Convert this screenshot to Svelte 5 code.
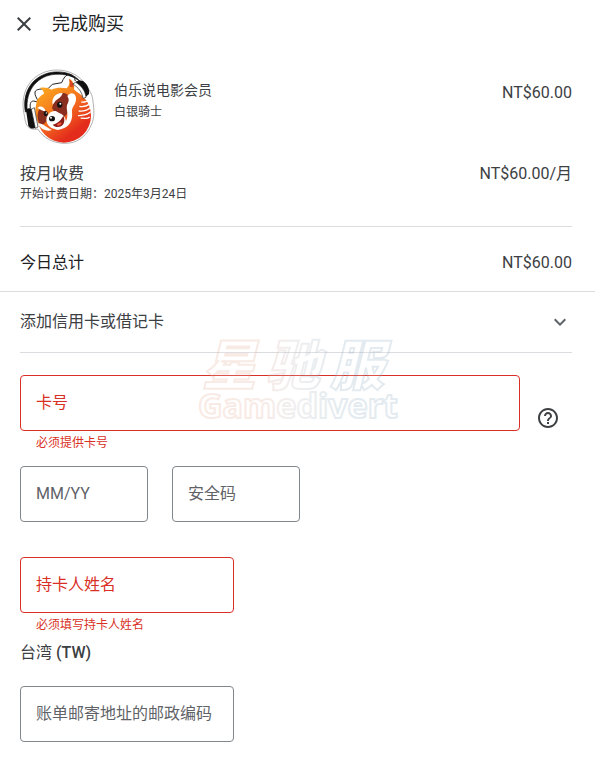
<script lang="ts">
	let cardNumber = $state('');
	let expiry = $state('');
	let cvc = $state('');
	let holder = $state('');
	let postcode = $state('');
	let cardOpen = $state(true);
</script>

<main class="checkout">
	<header>
		<button type="button" class="icon-button" aria-label="关闭">
			<svg width="24" height="24" viewBox="0 0 24 24" aria-hidden="true">
				<path d="M19 6.41 17.59 5 12 10.59 6.41 5 5 6.41 10.59 12 5 17.59 6.41 19 12 13.41 17.59 19 19 17.59 13.41 12z" />
			</svg>
		</button>
		<h1>完成购买</h1>
	</header>

	<section class="summary">
		<div class="product">
			<svg class="avatar" viewBox="0 9 228 228" aria-hidden="true">
				<defs>
					<linearGradient id="fur" gradientUnits="userSpaceOnUse" x1="60" y1="70" x2="160" y2="200">
						<stop offset="0" stop-color="#fba61d" />
						<stop offset="0.55" stop-color="#f4701f" />
						<stop offset="1" stop-color="#e42c1c" />
					</linearGradient>
				</defs>
				<path d="M10 132C2 60 48 14 108 12c42-1 78 20 97 56 6 10 13 20 14 40 4 24 4 48-4 66-16 40-46 59-82 58-36-1-62-16-80-43-22 4-33-6-37-24z" fill="#fff" stroke="#8b8b8b" stroke-width="2" />
				<path d="M16 138C4 66 50 22 104 18c32-2 58 6 78 30 -22-18-46-25-77-23C58 28 14 68 22 136z" fill="#111" stroke="#111" stroke-width="2" />
				<path d="M31 126c-2-14 2-24 14-20l10 2c-4-12-12-20-10-30 2-9 18-9 40-11l12-12 28-5c6-14 12-24 24-25 9 1 15 9 17 20" fill="none" stroke="#222" stroke-width="3" stroke-linejoin="round" />
				<circle cx="132" cy="149" r="81" fill="url(#fur)" />
				<path d="M50 104c6-10 13-16 22-21-1-8-6-13-12-17 12-3 25 0 34 5 15-7 32-7 46-4 8-8 10-18 7-29 12 6 18 18 15 32 26 22 36 54 22 82-16 34-60 49-100 40-20-4-38-30-38-58 0-12 4-20 4-30z" fill="url(#fur)" />
				<path d="M147 39c9 5 14 14 14 25l-12-2c2-8 1-15-2-23z" fill="#d9481e" />
				<path d="M58 130c10-6 24 4 28 18l2 8-14 16-12 8c-10-14-12-38-4-50z" fill="#8a2f20" />
				<path d="M104 100c10-26 42-25 48 2 3 22-8 44-24 54l-22-14-10-16z" fill="#8a2f20" />
				<path d="M98 116c-4-20 8-36 30-35-4 14-16 18-22 24-3 4-5 8-8 11z" fill="#fff" />
				<path d="M52 126c8-10 22-3 25 9-8 2-16-4-25-9z" fill="#fff" />
				<path d="M80 154c8-18 24-24 36-14 12 4 20 12 22 24-3 18-14 28-30 26-20-2-32-18-28-36z" fill="#fff" />
				<path d="M54 172c16 1 24 12 42 20-16 6-36-2-42-20z" fill="#fff" />
				<path d="M142 90c12-16 28-6 26 12-2 16-14 22-12 36 3 26-8 46-34 52-6 2-14 1-18-1 24-4 36-18 38-38 2-16-6-28 2-40 4-8 2-14-2-21z" fill="#fff" />
				<path d="M98 176c14-4 26-14 32-27 8 16 0 34-16 34-7 0-12-3-16-7z" fill="#8b1d17" />
				<path d="M110 178c3-8 10-10 15-8-1 7-8 11-15 8z" fill="#ef5340" />
				<ellipse cx="96" cy="158" rx="9" ry="8" fill="#111" />
				<circle cx="93" cy="155" r="3" fill="#fff" />
				<ellipse cx="77" cy="143" rx="6" ry="7" fill="#111" />
				<circle cx="79" cy="141" r="2" fill="#fff" />
				<ellipse cx="119" cy="116" rx="8" ry="9" fill="#111" />
				<circle cx="121" cy="113" r="3" fill="#fff" />
				<path d="M184 108c12 2 20-4 26-10M178 121c16 4 26-3 34-10M176 135c16 2 28-3 37-11M174 149c15-2 28 0 38-12M182 157c12-2 18 4 27-4" fill="none" stroke="#fff" stroke-width="4" />
				<path d="M18 132c4-6 14-7 18-3l12 54c-8 8-19 5-23-4z" fill="#111" />
				<path d="M34 130l9-5 11 58-8 4z" fill="#fff" stroke="#222" stroke-width="2" />
				<path d="M166 48c8-5 18-6 24-2 12 9 20 24 17 38l-10 9c-4-20-14-34-31-45z" fill="#111" />
				<path d="M158 54l9-5c18 11 29 26 31 45l-9 3c-3-19-14-33-31-43z" fill="#fff" stroke="#222" stroke-width="2" />
			</svg>
			<div class="product-name">
				<h2>伯乐说电影会员</h2>
				<p>白银骑士</p>
			</div>
			<span class="price">NT$60.00</span>
		</div>

		<div class="row billing">
			<div>
				<p>按月收费</p>
				<small>开始计费日期：2025年3月24日</small>
			</div>
			<span class="price">NT$60.00/月</span>
		</div>

		<div class="row total">
			<strong>今日总计</strong>
			<span class="price">NT$60.00</span>
		</div>
	</section>

	<section class="payment">
		<button type="button" class="method" aria-expanded={cardOpen} onclick={() => (cardOpen = !cardOpen)}>
			<span>添加信用卡或借记卡</span>
			<svg width="24" height="24" viewBox="0 0 24 24" aria-hidden="true">
				<path d="M7.41 8.59 12 13.17l4.59-4.58L18 10l-6 6-6-6z" />
			</svg>
		</button>

		{#if cardOpen}
			<form>
				<div class="card-row">
					<div class="field-group">
						<label class="field error">
							<span class:filled={cardNumber}>卡号</span>
							<input type="text" inputmode="numeric" autocomplete="cc-number" aria-describedby="number-error" bind:value={cardNumber} />
						</label>
						<p class="message" id="number-error">必须提供卡号</p>
					</div>
					<button type="button" class="icon-button help" aria-label="帮助">
						<svg width="24" height="24" viewBox="0 0 24 24" aria-hidden="true">
							<path d="M11 18h2v-2h-2v2zm1-16C6.48 2 2 6.48 2 12s4.48 10 10 10 10-4.48 10-10S17.52 2 12 2zm0 18c-4.41 0-8-3.59-8-8s3.59-8 8-8 8 3.59 8 8-3.59 8-8 8zm0-14c-2.21 0-4 1.79-4 4h2c0-1.1.9-2 2-2s2 .9 2 2c0 2-3 1.75-3 5h2c0-2.25 3-2.5 3-5 0-2.21-1.79-4-4-4z" />
						</svg>
					</button>
				</div>

				<div class="short-fields">
					<label class="field">
						<span class:filled={expiry}>MM/YY</span>
						<input type="text" autocomplete="cc-exp" bind:value={expiry} />
					</label>
					<label class="field">
						<span class:filled={cvc}>安全码</span>
						<input type="text" autocomplete="cc-csc" bind:value={cvc} />
					</label>
				</div>

				<div class="address">
					<label class="field error">
						<span class:filled={holder}>持卡人姓名</span>
						<input type="text" autocomplete="cc-name" aria-describedby="holder-error" bind:value={holder} />
					</label>
					<p class="message" id="holder-error">必须填写持卡人姓名</p>
					<p class="country">台湾 <b>(TW)</b></p>
					<label class="field">
						<span class:filled={postcode}>账单邮寄地址的邮政编码</span>
						<input type="text" autocomplete="postal-code" bind:value={postcode} />
					</label>
				</div>
			</form>
		{/if}
	</section>

	<svg class="watermark" width="208" height="84" viewBox="0 0 208 84" aria-hidden="true">
		<defs>
			<linearGradient id="mark" gradientUnits="userSpaceOnUse" x1="0" y1="0" x2="208" y2="0">
				<stop offset="0.3" stop-color="#e8b5a2" />
				<stop offset="0.5" stop-color="#c8c8cc" />
				<stop offset="0.7" stop-color="#9fbacb" />
			</linearGradient>
		</defs>
		<g fill="#fff" fill-opacity="0.6" stroke="url(#mark)" stroke-width="2">
			<text class="mark-title" x="8 72 136" y="47">星驰服</text>
			<text class="mark-name" x="4" y="80">Gamedivert</text>
		</g>
	</svg>
</main>

<style>
	:global(body) {
		margin: 0;
		background: #fff;
	}

	.checkout {
		position: relative;
		font-family: Roboto, 'Noto Sans CJK SC', sans-serif;
		font-size: 16px;
		line-height: 24px;
		color: #3c4043;
		padding-bottom: 16px;
	}

	h1, h2, p {
		margin: 0;
		font-weight: 400;
	}

	button {
		font: inherit;
		color: inherit;
		background: none;
		border: 0;
		padding: 0;
		cursor: pointer;
	}

	button svg {
		display: block;
		fill: currentColor;
	}

	header {
		display: flex;
		align-items: center;
		gap: 16px;
		height: 48px;
		padding: 0 12px;
		color: #202124;
	}

	header .icon-button {
		color: #3c4043;
	}

	h1 {
		font-size: 18px;
	}

	.summary {
		padding: 21px 23px 16px 20px;
		border-bottom: 1px solid #dadce0;
	}

	.product {
		display: flex;
		align-items: flex-start;
	}

	.avatar {
		width: 76px;
		height: 76px;
		flex-shrink: 0;
	}

	.product-name {
		flex: 1;
		padding: 9px 0 0 18px;
	}

	.product-name h2 {
		font-size: 14px;
	}

	.product-name p {
		font-size: 12px;
		line-height: 20px;
	}

	.product .price {
		padding-top: 12px;
	}

	.row {
		display: flex;
		justify-content: space-between;
	}

	.billing {
		padding: 17px 0 24px;
		border-bottom: 1px solid #dadce0;
	}

	.billing small {
		display: block;
		font-size: 12px;
		line-height: 16px;
	}

	.total {
		padding-top: 24px;
	}

	.total strong {
		font-weight: 400;
		color: #202124;
	}

	.payment {
		padding: 0 23px 0 20px;
	}

	.method {
		display: flex;
		align-items: center;
		justify-content: space-between;
		width: 100%;
		height: 61px;
		border-bottom: 1px solid #dadce0;
	}

	.method svg {
		color: #5f6368;
	}

	form {
		padding-top: 22px;
	}

	.card-row {
		display: flex;
		gap: 16px;
	}

	.field-group {
		flex: 1;
	}

	.help {
		align-self: flex-start;
		padding: 31px 12px 0 0;
	}

	.field {
		display: grid;
		align-items: center;
		color: #5f6368;
	}

	.field span,
	.field input {
		grid-area: 1 / 1;
	}

	.field span {
		padding-left: 16px;
		pointer-events: none;
	}

	.field span.filled {
		align-self: start;
		font-size: 12px;
		line-height: 16px;
	}

	.field input {
		box-sizing: border-box;
		width: 100%;
		height: 56px;
		padding: 8px 15px 0;
		font: inherit;
		color: #202124;
		background: transparent;
		border: 1px solid #80868b;
		border-radius: 4px;
	}

	.error {
		color: #d93025;
	}

	.field.error input {
		border-color: #d93025;
	}

	.message {
		padding-left: 16px;
		font-size: 12px;
		color: #d93025;
	}

	.short-fields {
		display: grid;
		grid-template-columns: repeat(2, 128px);
		gap: 24px;
		padding: 11px 0 35px;
	}

	.address {
		max-width: 214px;
	}

	.country {
		padding: 4px 0 21px;
	}

	.country b {
		font-weight: 500;
	}

	/* lies over the card fields */
	.watermark {
		position: absolute;
		top: 338px;
		left: 50%;
		margin-left: -104px;
		overflow: visible;
		opacity: 0.28;
		pointer-events: none;
	}

	.mark-title {
		font: italic 900 54px 'Noto Sans CJK SC', sans-serif;
	}

	.mark-name {
		font: 700 34px 'Noto Sans', sans-serif;
	}
</style>
